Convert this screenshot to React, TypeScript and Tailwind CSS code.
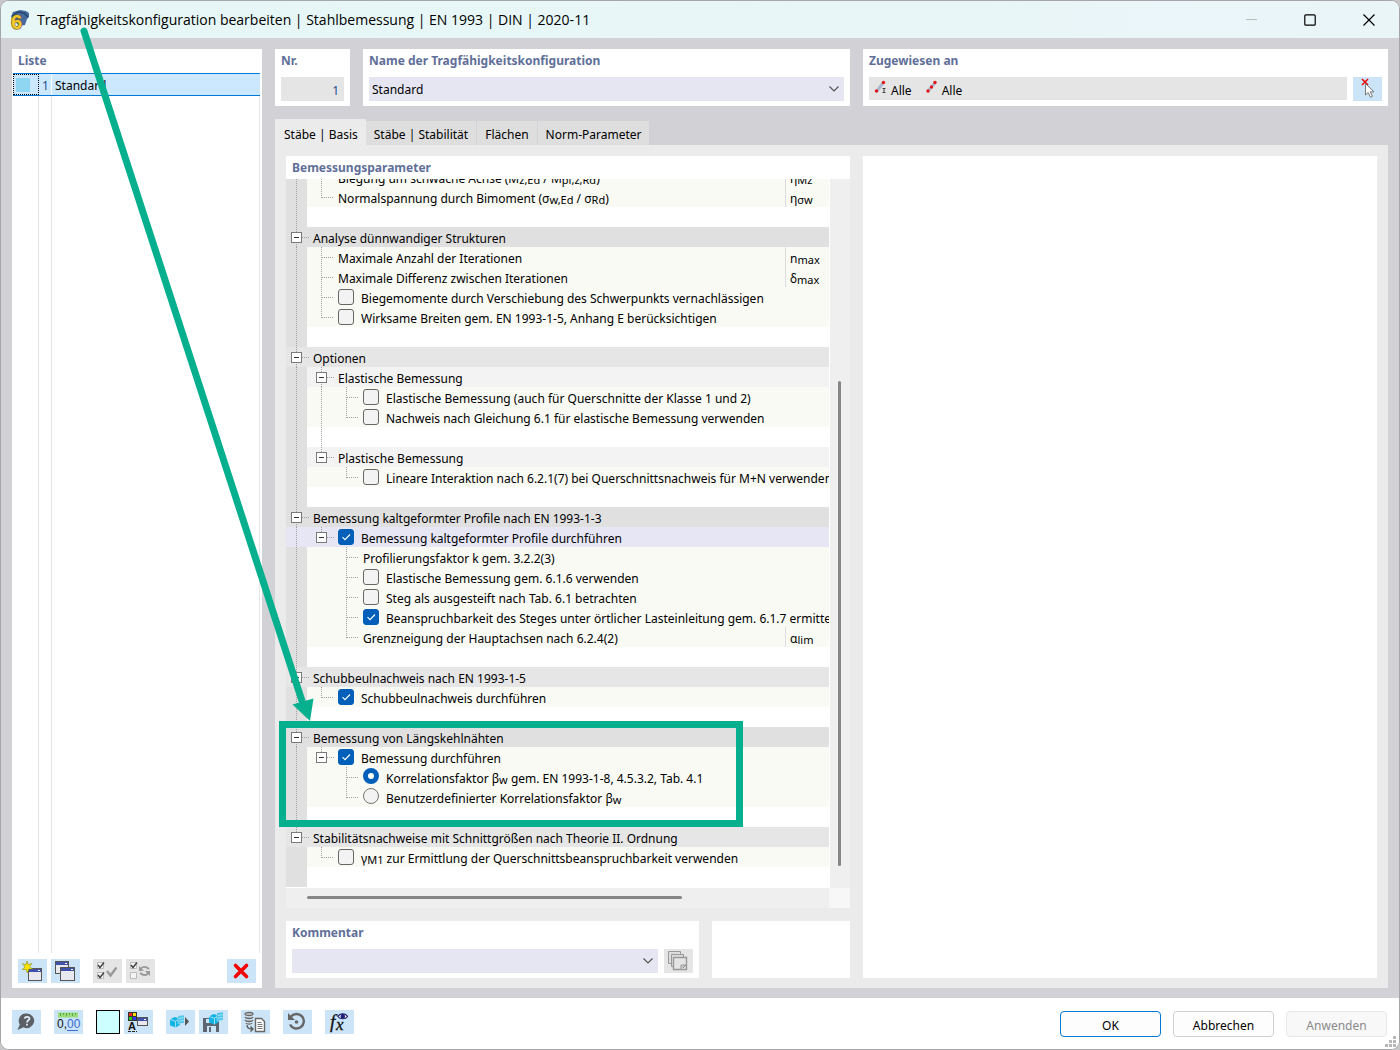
import { type ReactElement, type ReactNode } from 'react'
import clsx from 'clsx'

type Tone = 'header' | 'headerAlt' | 'group' | 'selected' | 'item' | 'spacer'

type TreeRow = {
  // one character per 25px guide cell: v = line, t = tee, e = elbow,
  // m = expander with siblings below, l = last expander, _ = empty
  guides: string
  tone?: Tone
  label?: ReactNode
  control?: 'checkbox' | 'radio'
  checked?: boolean
  symbol?: ReactNode
}

const Sub = ({ children }: { children: ReactNode }): ReactElement => (
  <sub className="-bottom-px text-[11px]">{children}</sub>
)

const rows: TreeRow[] = [
  {
    guides: 'vt',
    label: <>Biegung um schwache Achse (M<Sub>z,Ed</Sub> / M<Sub>pl,z,Rd</Sub>)</>,
    symbol: <>η<Sub>Mz</Sub></>,
  },
  {
    guides: 've',
    label: <>Normalspannung durch Bimoment (σ<Sub>w,Ed</Sub> / σ<Sub>Rd</Sub>)</>,
    symbol: <>η<Sub>σw</Sub></>,
  },
  { guides: 'v', tone: 'spacer' },
  { guides: 'm', tone: 'header', label: 'Analyse dünnwandiger Strukturen' },
  { guides: 'vt', label: 'Maximale Anzahl der Iterationen', symbol: <>n<Sub>max</Sub></> },
  { guides: 'vt', label: 'Maximale Differenz zwischen Iterationen', symbol: <>δ<Sub>max</Sub></> },
  { guides: 'vt', control: 'checkbox', label: 'Biegemomente durch Verschiebung des Schwerpunkts vernachlässigen' },
  { guides: 've', control: 'checkbox', label: 'Wirksame Breiten gem. EN 1993-1-5, Anhang E berücksichtigen' },
  { guides: 'v', tone: 'spacer' },
  { guides: 'm', tone: 'headerAlt', label: 'Optionen' },
  { guides: 'vm', tone: 'group', label: 'Elastische Bemessung' },
  { guides: 'vvt', control: 'checkbox', label: 'Elastische Bemessung (auch für Querschnitte der Klasse 1 und 2)' },
  { guides: 'vve', control: 'checkbox', label: 'Nachweis nach Gleichung 6.1 für elastische Bemessung verwenden' },
  { guides: 'vv', tone: 'spacer' },
  { guides: 'vl', tone: 'group', label: 'Plastische Bemessung' },
  { guides: 'v_e', control: 'checkbox', label: 'Lineare Interaktion nach 6.2.1(7) bei Querschnittsnachweis für M+N verwenden' },
  { guides: 'v', tone: 'spacer' },
  { guides: 'm', tone: 'header', label: 'Bemessung kaltgeformter Profile nach EN 1993-1-3' },
  { guides: 'vl', tone: 'selected', control: 'checkbox', checked: true, label: 'Bemessung kaltgeformter Profile durchführen' },
  { guides: 'v_t', label: 'Profilierungsfaktor k gem. 3.2.2(3)' },
  { guides: 'v_t', control: 'checkbox', label: 'Elastische Bemessung gem. 6.1.6 verwenden' },
  { guides: 'v_t', control: 'checkbox', label: 'Steg als ausgesteift nach Tab. 6.1 betrachten' },
  {
    guides: 'v_t',
    control: 'checkbox',
    checked: true,
    label: 'Beanspruchbarkeit des Steges unter örtlicher Lasteinleitung gem. 6.1.7 ermitteln',
  },
  { guides: 'v_e', label: 'Grenzneigung der Hauptachsen nach 6.2.4(2)', symbol: <>α<Sub>lim</Sub></> },
  { guides: 'v', tone: 'spacer' },
  { guides: 'm', tone: 'headerAlt', label: 'Schubbeulnachweis nach EN 1993-1-5' },
  { guides: 've', control: 'checkbox', checked: true, label: 'Schubbeulnachweis durchführen' },
  { guides: 'v', tone: 'spacer' },
  { guides: 'm', tone: 'header', label: 'Bemessung von Längskehlnähten' },
  { guides: 'vl', control: 'checkbox', checked: true, label: 'Bemessung durchführen' },
  {
    guides: 'v_t',
    control: 'radio',
    checked: true,
    label: <>Korrelationsfaktor β<Sub>w</Sub> gem. EN 1993-1-8, 4.5.3.2, Tab. 4.1</>,
  },
  { guides: 'v_e', control: 'radio', label: <>Benutzerdefinierter Korrelationsfaktor β<Sub>w</Sub></> },
  { guides: 'v', tone: 'spacer' },
  { guides: 'l', tone: 'headerAlt', label: 'Stabilitätsnachweise mit Schnittgrößen nach Theorie II. Ordnung' },
  {
    guides: '_e',
    control: 'checkbox',
    label: <>γ<Sub>M1</Sub> zur Ermittlung der Querschnittsbeanspruchbarkeit verwenden</>,
  },
  { guides: '_', tone: 'spacer' },
]

const TONES: Record<Tone, string> = {
  header: 'bg-[#e0e0e0]',
  headerAlt: 'bg-[#e6e6e6]',
  selected: 'bg-[#e6e6f5]',
  group: 'bg-[linear-gradient(to_right,#e0e0e0_21px,#f3f3f3_21px)]',
  item: 'bg-[linear-gradient(to_right,#e0e0e0_21px,#f9faf4_21px)]',
  spacer: 'bg-[linear-gradient(to_right,#e0e0e0_21px,#ffffff_21px)]',
}

const LINES: Record<string, string> = {
  v: 'M8.5 0V20',
  t: 'M8.5 0V20M9 10.5H21',
  e: 'M8.5 0V11M9 10.5H21',
  m: 'M8.5 0V5M8.5 17V20M14 10.5H22',
  l: 'M8.5 0V5M14 10.5H22',
  _: '',
}

function Guide({ kind }: { kind: string }): ReactElement {
  const expander = kind === 'm' || kind === 'l'
  const drawing = (
    <svg width="25" height="20" viewBox="0 0 25 20" shapeRendering="crispEdges" aria-hidden>
      <path d={LINES[kind]} stroke="#a0a0a0" strokeDasharray="1 1" fill="none" />
      {expander && (
        <>
          <rect x="3.5" y="5.5" width="10" height="10" fill="#fff" stroke="#7a7a7a" />
          <path d="M6 10.5H11" stroke="#333" />
        </>
      )}
    </svg>
  )
  return expander ? (
    <button type="button" aria-label="Zuklappen" className="shrink-0">
      {drawing}
    </button>
  ) : (
    <span className="shrink-0">{drawing}</span>
  )
}

function Control({ type, checked }: { type: 'checkbox' | 'radio'; checked?: boolean }): ReactElement {
  if (type === 'radio') {
    return (
      <input
        type="radio"
        name="korrelationsfaktor"
        defaultChecked={checked}
        className="mb-0.5 size-4 shrink-0 appearance-none rounded-full border border-[#767676] bg-[#f3f3f3] checked:border-[5px] checked:border-[#005fb8] checked:bg-white"
      />
    )
  }
  return (
    <span className="grid shrink-0">
      <input
        type="checkbox"
        defaultChecked={checked}
        className="peer col-start-1 row-start-1 size-4 appearance-none rounded-[3px] border border-[#666] bg-[#f3f3f3] checked:border-[#005fb8] checked:bg-[#005fb8]"
      />
      <svg viewBox="0 0 16 16" className="pointer-events-none invisible col-start-1 row-start-1 size-4 peer-checked:visible">
        <path d="M4.5 8.2 7 10.7 12 5.5" fill="none" stroke="#fff" strokeWidth="1.1" />
      </svg>
    </span>
  )
}

function Row({ row }: { row: TreeRow }): ReactElement {
  return (
    <div className={clsx('flex h-5 pl-0.5 leading-5 whitespace-nowrap', TONES[row.tone ?? 'item'])}>
      {[...row.guides].map((kind, i) => (
        <Guide key={i} kind={kind} />
      ))}
      {row.control ? (
        <label className="flex h-5 min-w-0 flex-1 items-center gap-[7px] overflow-hidden">
          <Control type={row.control} checked={row.checked} />
          <span className="pt-1">{row.label}</span>
        </label>
      ) : (
        <span className="min-w-0 flex-1 pt-0.5">{row.label}</span>
      )}
      {row.symbol && <span className="w-11 shrink-0 border-l border-[#dcdcdc] pt-0.5 pl-1">{row.symbol}</span>}
    </div>
  )
}

function Heading({ children }: { children: ReactNode }): ReactElement {
  return <h2 className="h-[23px] px-1.5 leading-[23px] font-bold text-[#5f6f99]">{children}</h2>
}

function Chevron(): ReactElement {
  return (
    <svg
      viewBox="0 0 10 6"
      className="pointer-events-none absolute top-1/2 right-[5px] h-1.5 w-2.5 -translate-y-1/2"
      fill="none"
      stroke="#555"
      strokeWidth="1.2"
    >
      <path d="M.5 .5 5 5 9.5 .5" />
    </svg>
  )
}

function ToolButton({ label, disabled, children }: { label: string; disabled?: boolean; children: ReactNode }): ReactElement {
  return (
    <button
      type="button"
      aria-label={label}
      disabled={disabled}
      className={clsx('h-6 w-[29px] shrink-0', disabled ? 'bg-[#e5e5e5]' : 'bg-[#cce4f7]')}
    >
      <svg width="29" height="24" viewBox="0 0 29 24" fill="none">
        {children}
      </svg>
    </button>
  )
}

// small application window used by several toolbar icons
function MiniWindow({ x, y, w = 13, h = 12 }: { x: number; y: number; w?: number; h?: number }): ReactElement {
  return (
    <g>
      <rect x={x + 0.5} y={y + 0.5} width={w} height={h} fill="#e8e8ee" stroke="#555" />
      <rect x={x + 1} y={y + 1} width={w - 1} height="3" fill="#3f51a8" />
      <path d={`M${x + w - 3} ${y + 2.5}h2`} stroke="#fff" />
    </g>
  )
}

function Cube({ x, y }: { x: number; y: number }): ReactElement {
  return (
    <g transform={`translate(${x} ${y})`}>
      <path d="M0 4.5 4.5 2 10 3.5V10L5.5 12.5 0 10.5Z" fill="#12b4e6" />
      <path d="M0 4.5 5.5 6.2 10 3.5M5.5 6.2V12.5" stroke="#bfe9f8" strokeWidth=".8" />
      <path d="M8 1 14 0V8L8 9Z" fill="#12b4e6" stroke="#cce4f7" strokeWidth=".6" />
      <path d="M10 .8V8.5M12 .5V8.2M8 3.7 14 2.7M8 6.3 14 5.3" stroke="#bfe9f8" strokeWidth=".7" />
    </g>
  )
}

function TitleBar(): ReactElement {
  return (
    <header className="flex h-[37px] shrink-0 items-center bg-linear-to-r from-[#e6f7f6] to-[#eaf5f8] pl-2">
      <svg width="22" height="22" viewBox="0 0 22 22" className="shrink-0 overflow-visible" aria-hidden>
        <path d="M2 8 4 3 11 1 17 2 20 4 20 8 18 10 16 16 10 17 4 10Z" fill="#456a9c" />
        <path d="M3 7 9 3 15 4 19 8" stroke="#26456f" strokeWidth="1.5" fill="none" />
        <text
          x="2"
          y="20"
          fontSize="20"
          fontWeight="bold"
          fill="#f4c82c"
          stroke="#6b5a24"
          strokeWidth="1.2"
          paintOrder="stroke"
          className="font-['Liberation_Sans',sans-serif]"
        >
          6
        </text>
      </svg>
      <h1 className="flex-1 pl-1.5 font-['Open_Sans','Noto_Sans',sans-serif] text-[14px]">
        Tragfähigkeitskonfiguration bearbeiten | Stahlbemessung | EN 1993 | DIN | 2020-11
      </h1>
      <div className="flex">
        <button type="button" aria-label="Minimieren" disabled className="grid h-[35px] w-[58px] place-items-center">
          <svg width="12" height="12" viewBox="0 0 12 12" stroke="#b4bcbe">
            <path d="M0 5.5H11" />
          </svg>
        </button>
        <button type="button" aria-label="Maximieren" className="grid h-[35px] w-[58px] place-items-center">
          <svg width="12" height="12" viewBox="0 0 12 12" fill="none" stroke="#000" strokeWidth="1.2">
            <rect x=".8" y=".8" width="10.4" height="10.4" rx="1" />
          </svg>
        </button>
        <button type="button" aria-label="Schließen" className="grid h-[35px] w-[60px] place-items-center">
          <svg width="12" height="12" viewBox="0 0 12 12" fill="none" stroke="#000" strokeWidth="1.2">
            <path d="M.5 .5 11.5 11.5M11.5 .5 .5 11.5" />
          </svg>
        </button>
      </div>
    </header>
  )
}

function ListPanel(): ReactElement {
  return (
    <aside className="flex w-[250px] shrink-0 flex-col bg-white">
      <Heading>Liste</Heading>
      <div className="flex flex-1 flex-col pt-px pr-0.5 pl-px">
        <button type="button" className="flex h-[23px] w-full border-y border-[#0078d7] bg-[#cce8ff] text-left leading-[23px]">
          <span className="h-full w-[26px] border border-dotted border-black pt-[3px] pl-0.5">
            <span className="block size-3.5 bg-[#8fd6f2]" />
          </span>
          <span className="w-[13px] border-r border-white pl-[3px] text-[#1f4e8c]">1</span>
          <span className="pl-[3px]">Standard</span>
        </button>
        <div className="flex flex-1">
          <div className="w-[26px] border-r border-[#e5e5e5]" />
          <div className="w-[13px] border-r border-[#e5e5e5]" />
          <div className="flex-1 border-r border-[#e5e5e5]" />
        </div>
      </div>
      <div className="flex px-1.5 pt-1.5 pb-[5px]">
        <ToolButton label="Neu">
          <MiniWindow x={10} y={9} />
          <path d="m9 2 1.2 3.6L14 4.5l-2.4 3 2.9 2.4-3.8.1L9.5 14 8 10.4 4.2 10.6 7 8 4.5 4.6 8 5.8Z" fill="#ffe600" stroke="#8a8a20" strokeWidth=".6" />
        </ToolButton>
        <div className="w-1" />
        <ToolButton label="Kopieren">
          <MiniWindow x={4} y={2} />
          <MiniWindow x={9} y={8} w={14} h={13} />
        </ToolButton>
        <div className="w-[13px]" />
        <ToolButton label="Alle auswählen" disabled>
          <path d="M4.5 3.5h6v6h-6zM4.5 13.5h6v6h-6z" fill="#f4f4f4" stroke="#bbb" />
          <path d="m5 6 2 2.5 4-5M5 16l2 2.5 4-5" stroke="#444" strokeWidth="1.5" />
          <path d="m14 12 3.5 4.5 6-8" stroke="#999" strokeWidth="2.4" />
        </ToolButton>
        <div className="w-1" />
        <ToolButton label="Auswahl umkehren" disabled>
          <path d="M4.5 3.5h6v6h-6zM4.5 13.5h6v6h-6z" fill="#f4f4f4" stroke="#bbb" />
          <path d="m5 6 2 2.5 4-5" stroke="#444" strokeWidth="1.5" />
          <path d="M15 9.5c2-2 5-2 8 .5M22 14.5c-2 2-5 2-8-.5" stroke="#999" strokeWidth="1.8" />
          <path d="M13 7v5h5zM24 17v-5h-5z" fill="#999" />
        </ToolButton>
        <div className="flex-1" />
        <ToolButton label="Löschen">
          <path d="M8.5 6.5 19.5 17.5M19.5 6.5 8.5 17.5" stroke="#f40000" strokeWidth="3.6" strokeLinecap="round" />
        </ToolButton>
      </div>
    </aside>
  )
}

function TopFields(): ReactElement {
  return (
    <div className="flex gap-[13px]">
      <div className="flex w-[575px] shrink-0 gap-[13px]">
        <section className="w-[75px] bg-white pb-[5px]">
          <Heading>Nr.</Heading>
          <div className="px-1.5 pt-[5px]">
            <input
              aria-label="Nr."
              readOnly
              value="1"
              className="block h-6 w-full bg-[#e5e5e5] pt-0.5 pr-[5px] text-right text-[#1f4e8c]"
            />
          </div>
        </section>
        <section className="flex-1 bg-white">
          <Heading>Name der Tragfähigkeitskonfiguration</Heading>
          <div className="relative mx-1.5 mt-[5px]">
            <select aria-label="Name der Tragfähigkeitskonfiguration" className="block h-6 w-full appearance-none bg-[#e6e6f2] px-[3px] pt-0.5">
              <option>Standard</option>
            </select>
            <Chevron />
          </div>
        </section>
      </div>
      <section className="min-w-0 flex-1 bg-white">
        <Heading>Zugewiesen an</Heading>
        <div className="mx-1.5 mt-[5px] flex gap-1.5">
          <div className="flex h-[23px] flex-1 items-center bg-[#e5e5e5] pl-1">
            <svg width="17" height="16" viewBox="-1 0 17 16" className="mb-1">
              <path d="M3 12 9 4" stroke="#a9b9d2" strokeWidth="3" />
              <path d="M8.5 9.5h3M8.5 13.5h3M10 9.5v4" stroke="#444" />
              <circle cx="2.5" cy="12" r="1.7" fill="#e01818" />
              <circle cx="9.5" cy="3.5" r="1.7" fill="#e01818" />
            </svg>
            <span className="pt-1 pl-px">Alle</span>
            <svg width="17" height="16" viewBox="-1 0 17 16" className="mb-1 ml-3">
              <path d="M3 12 10 4" stroke="#a9b9d2" strokeWidth="3" />
              <circle cx="3" cy="12" r="1.7" fill="#e01818" />
              <circle cx="6.5" cy="8" r="1.7" fill="#e01818" />
              <circle cx="10" cy="3.5" r="1.7" fill="#e01818" />
            </svg>
            <span className="pt-1 pl-px">Alle</span>
          </div>
          <ToolButton label="Zuweisung aufheben">
            <path d="m9 2 6 6M15 2 9 8" stroke="#e81010" strokeWidth="1.7" />
            <path d="M12.5 6.5V18l2.7-2.5 2.3 4.8 2-1-2.2-4.5h3.7Z" fill="#fff" stroke="#777" />
          </ToolButton>
        </div>
      </section>
    </div>
  )
}

function Tabs(): ReactElement {
  return (
    <div role="tablist" className="mt-[13px] flex items-end">
      <button type="button" role="tab" aria-selected className="h-[26px] bg-[#ebebeb] pt-1.5 pr-2 pl-[9px]">
        Stäbe | Basis
      </button>
      {['Stäbe | Stabilität', 'Flächen', 'Norm-Parameter'].map((tab) => (
        <button
          key={tab}
          type="button"
          role="tab"
          aria-selected={false}
          className="h-6 border-r border-[#d2d1d6] bg-[#dedede] px-2 pt-1"
        >
          {tab}
        </button>
      ))}
    </div>
  )
}

function ParameterTree(): ReactElement {
  return (
    <section className="flex min-h-0 flex-1 flex-col bg-white">
      <Heading>Bemessungsparameter</Heading>
      <div className="flex min-h-0 flex-1">
        <div className="min-w-0 flex-1 overflow-hidden pr-px">
          <div className="-mt-3">
            {rows.map((row, i) => (
              <Row key={i} row={row} />
            ))}
          </div>
        </div>
        <div className="flex w-5 flex-col items-center bg-[#efefef]">
          <div className="h-[202px]" />
          <div className="mr-px w-[3px] flex-1 rounded-full bg-[#868686]" />
          <div className="h-[22px]" />
        </div>
      </div>
      <div className="flex h-5 bg-[#efefef]">
        <div className="flex flex-1 items-center pb-0.5 pl-[21px]">
          <div className="h-[3px] w-[375px] rounded-full bg-[#868686]" />
        </div>
        <div className="w-[21px] bg-[#f7f7f7]" />
      </div>
    </section>
  )
}

function CommentRow(): ReactElement {
  return (
    <div className="flex h-[57px] shrink-0 gap-[13px]">
      <section className="flex-1 bg-white">
        <Heading>Kommentar</Heading>
        <div className="mx-1.5 mt-[5px] flex gap-1.5">
          <div className="relative flex-1">
            <select aria-label="Kommentar" className="block h-6 w-full appearance-none bg-[#e6e6f2] px-[3px]" />
            <Chevron />
          </div>
          <ToolButton label="Kommentare übernehmen" disabled>
            <path d="M4.5 2.5h12v12h-12z" fill="#ddd" stroke="#999" />
            <path d="M7.5 5.5h12v12h-12z" fill="#ddd" stroke="#999" />
            <path d="M9.5 8.5h13v12h-13z" fill="#e5e5e5" stroke="#999" strokeWidth="1.4" />
            <path d="M17 21v-5h5" fill="#ccc" stroke="#999" />
            <path d="m19 19 3-3" stroke="#888" />
          </ToolButton>
        </div>
      </section>
      <section className="w-[138px] bg-white" />
    </div>
  )
}

function Footer(): ReactElement {
  const action = 'h-[26px] w-[101px] rounded-[4px] border pt-1'
  return (
    <footer className="relative flex h-[51px] shrink-0 items-start bg-white pt-3 pr-3 pl-[11px]">
      <div className="flex flex-1 gap-[13px]">
        <ToolButton label="Hilfe">
          <path d="M15 3.5a7.3 7.3 0 1 1-3.500 13.800L5.500 20l2.300-5.500A7.300 7.300 0 0 1 15 3.500Z" fill="#5b5f66" />
          <path d="M12.700 8.600c.3-2.600 5-2.300 4.700.2-.2 1.500-2.400 1.700-2.400 3.700M15 13.700v1.900" stroke="#e3eefa" strokeWidth="1.8" />
        </ToolButton>
        <ToolButton label="Einheiten">
          <path d="M4 2.5h20v5H4z" fill="#9bdc7c" />
          <path d="M6.5 3v3M9.5 3v2M12.5 3v3M15.5 3v2M18.5 3v3M21.5 3v2" stroke="#5ba844" />
          <text x="3" y="18" fontSize="12" fill="#111" className="font-['Liberation_Sans',sans-serif]">
            0,<tspan fill="#3a6ad4">00</tspan>
          </text>
          <path d="M13 20.5H24" stroke="#3a6ad4" />
        </ToolButton>
        <div className="flex gap-1">
          <button type="button" aria-label="Farbe" className="size-6 border border-black bg-[#ccffff]" />
          <ToolButton label="Darstellung">
            <path d="M4 2h9v9H4z" fill="#333" />
            <path d="M5 3h3v3H5z" fill="#f22" />
            <path d="M9 3h3v3H9z" fill="#fd0" />
            <path d="M5 7h3v3H5z" fill="#2c2" />
            <path d="M9 7h3v3H9z" fill="#33f" />
            <text x="4" y="19.5" fontSize="11" fontWeight="bold" fill="#111" className="font-['Liberation_Sans',sans-serif]">
              A
            </text>
            <path d="M4 21.5H13" stroke="#222" strokeDasharray="3 1" />
            <MiniWindow x={13} y={7} w={10} h={8} />
          </ToolButton>
        </div>
        <div className="flex gap-1">
          <ToolButton label="Modell">
            <Cube x={4} y={5} />
            <path d="m19 7 4 4.5-4 4.5Z" fill="#555" />
          </ToolButton>
          <ToolButton label="Als Standard speichern">
            <path d="M4 8h14l2 2v12H4Z" fill="#5d6670" />
            <path d="M7 9h8v4H7zM8 16h9v6H8z" fill="#cce4f7" />
            <path d="M10 17h2v5h-2z" fill="#5d6670" />
            <Cube x={10} y={2} />
          </ToolButton>
        </div>
        <ToolButton label="Datenbank">
          <path d="M4 4c0-2 8-2 8 0s-8 2-8 0ZM4 7c1 2 7 2 8 0M4 10c1 2 7 2 8 0M5 13c1 1.5 5 1.5 6 0" fill="#cfd4d8" stroke="#666" strokeWidth="1.3" />
          <path d="M6 15c0 3 2 4 5 4M9.5 16.5l2.5 2.5-2.5 2.5" stroke="#555" strokeWidth="1.3" />
          <path d="M14.5 8.5h6l3 3v10h-9z" fill="#fff" stroke="#666" strokeWidth="1.4" />
          <path d="M16.5 12.5h4M16.5 14.5h5M16.5 16.5h5M16.5 18.5h5" stroke="#777" />
        </ToolButton>
        <ToolButton label="Zurücksetzen">
          <path d="M8 6.5A7.3 7.3 0 1 1 7 14.5" stroke="#666" strokeWidth="2.4" />
          <path d="M5 3v7h7Z" fill="#666" />
          <circle cx="13.5" cy="12" r="1.8" fill="#666" />
        </ToolButton>
        <ToolButton label="Formeln">
          <text x="5" y="18" fontSize="19" fontStyle="italic" fill="#111" stroke="#111" strokeWidth=".3" className="font-['Liberation_Serif',serif]">
            f
          </text>
          <text x="11" y="20" fontSize="17" fontStyle="italic" fill="#111" stroke="#111" strokeWidth=".3" className="font-['Liberation_Serif',serif]">
            x
          </text>
          <path d="M13 6.5c2-3.500 7.500-3.500 9.500 0-2 3-7.500 3-9.500 0Z" fill="#fff" stroke="#1d1d66" strokeWidth="1.2" />
          <circle cx="17.8" cy="6.2" r="2.2" fill="#1d1d7a" />
        </ToolButton>
      </div>
      <div className="flex gap-3 pt-px">
        <button type="button" className={clsx(action, 'border-[#0078d4] bg-[#fdfdfd]')}>
          OK
        </button>
        <button type="button" className={clsx(action, 'border-[#d0d0d0] bg-[#fdfdfd]')}>
          Abbrechen
        </button>
        <button type="button" disabled className={clsx(action, 'border-[#e9e9e9] bg-[#f8f8f8] text-[#8a8a8a]')}>
          Anwenden
        </button>
      </div>
      <svg width="11" height="11" viewBox="0 0 11 11" className="absolute right-[3px] bottom-0.5" fill="#b8b8b8" aria-hidden>
        <path d="M8 0h3v3H8zM4 4h3v3H4zM8 4h3v3H8zM0 8h3v3H0zM4 8h3v3H4zM8 8h3v3H8z" />
      </svg>
    </footer>
  )
}

function Callout(): ReactElement {
  return (
    <svg width="760" height="840" className="pointer-events-none absolute top-0 left-0" fill="none" stroke="#06b08f" strokeWidth="7" aria-hidden>
      <path d="M84 31 303 704" strokeLinecap="round" />
      <path d="M292.5 704.5 313.5 698.5 310 721Z" fill="#06b08f" stroke="none" />
      <rect x="282.5" y="724.5" width="457" height="99" />
    </svg>
  )
}

export default function App(): ReactElement {
  return (
    <div className="relative h-screen bg-[#c8c8cb] font-['Noto_Sans',sans-serif] text-[12px] text-black">
      <div className="flex h-full flex-col overflow-hidden rounded-[9px] border border-[#a6a6a8] bg-white">
        <TitleBar />
        <main className="flex min-h-0 flex-1 gap-[13px] bg-[#d2d1d6] px-[11px] pt-[11px] pb-2.5">
          <ListPanel />
          <div className="flex min-w-0 flex-1 flex-col">
            <TopFields />
            <Tabs />
            <div className="flex min-h-0 flex-1 gap-[13px] bg-[#ebebeb] p-[11px] pb-2.5">
              <div className="flex w-[564px] shrink-0 flex-col gap-[13px]">
                <ParameterTree />
                <CommentRow />
              </div>
              <section aria-label="Vorschau" className="flex-1 bg-white" />
            </div>
          </div>
        </main>
        <Footer />
      </div>
      <Callout />
    </div>
  )
}
